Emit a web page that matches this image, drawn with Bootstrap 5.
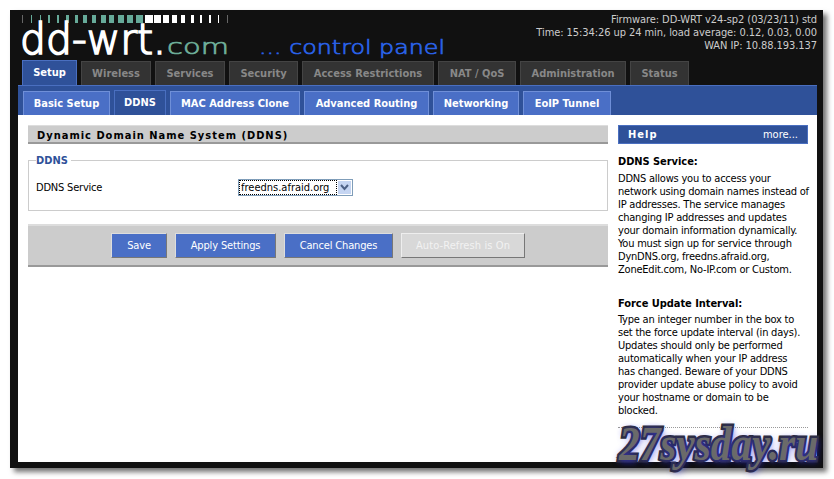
<!doctype html>
<html lang="en">
<head>
<meta charset="utf-8">
<title>DD-WRT control panel</title>
<link rel="stylesheet" href="https://cdn.jsdelivr.net/npm/bootstrap@5.3.0/dist/css/bootstrap.min.css">
<style>
html,body{height:100%;}
body{background:#fff;font-family:"DejaVu Sans Condensed","DejaVu Sans",sans-serif;font-size:11px;line-height:13px;color:#000;overflow:hidden;}
.frame{position:relative;margin:10px 0 0 10px;width:813px;height:458px;background:#111;box-shadow:4px 4px 5px rgba(0,0,0,.55);padding:0 6px 6px 8px;display:flex;flex-direction:column;}
.head{height:50px;flex:none;position:relative;}
.logo{position:absolute;left:-8px;top:0;}
.status{position:absolute;right:0;top:3px;text-align:right;color:#ccc;font-size:11px;line-height:13px;white-space:nowrap;letter-spacing:-.07px;}
.toptabs{height:25px;flex:none;margin-left:4px;gap:4px;align-items:flex-end;position:relative;}
.toptabs .nav-link{height:24px;padding:0;background:#333;border:1px solid #444;border-bottom:0;color:#888;font-weight:700;font-size:11px;line-height:24px;text-align:center;}
.toptabs .nav-link.on{height:25px;background:#2f5199;border-color:#4a6fc0;color:#fff;}
.subtabs{height:30px;flex:none;background:#2f5199;border-top:1px solid #4a6fc0;padding-left:5px;gap:4px;align-items:flex-end;}
.subtabs .nav-link{height:24px;padding:0;background:#4a6fc6;border:1px solid #6f8fd8;border-bottom:0;color:#fff;font-weight:700;font-size:11px;line-height:24px;text-align:center;}
.subtabs .nav-link.on{height:25px;background:#2f5199;border-color:#4a6fc0;}
.paper{flex:1 1 auto;background:#fff;padding:10px 10px 0;gap:10px;min-height:0;}
.mainpane{width:580px;flex:none;}
.sidepane{width:190px;flex:none;white-space:nowrap;}
.bar-title{height:19px;background:#ccc;border-bottom:2px solid #999;border-top:1px solid #ddd;padding-left:9px;font-weight:700;font-size:11px;letter-spacing:1px;line-height:19px;margin:0;}
.group{border:1px solid #ccc;margin:10px 0 13px;height:57px;padding:0 7px;}
.group legend{float:none;width:auto;margin:0;padding:0 3px 0 0;font-size:11px;font-weight:700;color:#2f5199;line-height:13px;}
.fieldrow{margin-top:12px;align-items:center;height:17px;}
.fieldname{width:202px;flex:none;letter-spacing:-.2px;}
.selectbox{border:1px solid #7f9db9;height:17px;background:#fff;width:115px;}
.selectbox select{appearance:none;border:1px dotted #000;background:#fff;font:inherit;padding:0 1px;height:15px;width:98px;line-height:13px;color:#000;}
.selectbox svg{flex:none;}
.actions{height:43px;background:#ccc;border-top:2px solid #ddd;border-bottom:2px solid #999;gap:8px;padding-left:83px;align-items:center;}
.actions .btn{height:25px;padding:0;border-radius:0;font-size:11px;line-height:21px;letter-spacing:-.15px;color:#fff;background:#4a6fc6;border:1px solid;border-color:#ddd #777 #777 #ddd;}
.actions .btn.off{background:#d8d8d8;color:#f2f2f2;opacity:1;letter-spacing:.1px;border-color:#eee #777 #777 #eee;}
.bar-help{height:19px;background:#2f5199;border:1px solid #4a6fc0;color:#fff;padding:0 9px;line-height:18px;}
.bar-help strong{letter-spacing:1px;}
.bar-help a{color:#fff;text-decoration:none;}
.helpitem{margin:0;}
.helpitem dt{font-weight:700;margin:10px 0 3px;font-size:11px;letter-spacing:-.05px;}
.helpitem dt:first-child{margin:11px 0 4px;}
.helpitem dd{margin:0 0 21px;letter-spacing:-.22px;}
.helpitem dd.tail{margin-bottom:10px;}
.rule{border:0;border-top:1px dotted #999;opacity:1;margin:0;}
.mark27{position:absolute;left:609px;top:406px;font:italic 700 48px/56px "Liberation Serif",serif;color:#6a6a6a;-webkit-text-stroke:5px #2e2e2e;paint-order:stroke fill;text-shadow:0 0 7px rgba(60,60,255,.55),2px 3px 8px rgba(30,30,200,.5);white-space:nowrap;transform:scaleX(.86);transform-origin:left center;}
.w1{width:70px}
</style>
</head>
<body>
<div class="frame">
  <div class="head">
    <svg class="logo" width="450" height="60" viewBox="10 0 450 60" role="img" aria-label="dd-wrt.com control panel">
      <g fill="#66aa99">
        <rect x="22" y="5" width="1" height="8" fill="#666"/><rect x="31" y="5" width="1" height="8"/><rect x="40" y="5" width="1" height="8"/><rect x="48" y="5" width="2" height="8"/><rect x="57" y="5" width="2" height="8"/><rect x="66" y="5" width="3" height="8"/><rect x="75" y="5" width="3" height="8"/><rect x="83" y="5" width="4" height="8"/><rect x="92" y="5" width="4" height="8"/><rect x="101" y="5" width="5" height="8"/><rect x="109" y="5" width="5" height="8"/><rect x="118" y="5" width="6" height="8"/><rect x="127" y="5" width="6" height="8"/><rect x="136" y="5" width="7" height="8"/>
      </g>
      <g fill="#fff">
        <rect x="145" y="5" width="8" height="8"/><rect x="154" y="5" width="7" height="8"/><rect x="163" y="5" width="6" height="8"/><rect x="172" y="5" width="5" height="8"/><rect x="181" y="5" width="4" height="8"/><rect x="191" y="5" width="3" height="8"/><rect x="200" y="5" width="2" height="8"/><rect x="209" y="5" width="2" height="8"/><rect x="218" y="5" width="1" height="8"/><rect x="227" y="5" width="1" height="8" fill="#666"/>
      </g>
      <text x="20" y="44" font-family="DejaVu Sans" font-size="42" font-weight="200" textLength="146" lengthAdjust="spacingAndGlyphs" fill="#fff" stroke="#fff" stroke-width="1.7">dd-wrt.</text>
      <text x="167" y="44" font-family="DejaVu Sans" font-size="22" font-weight="200" textLength="62" lengthAdjust="spacingAndGlyphs" fill="#6fb09a" stroke="#6fb09a" stroke-width=".7">com</text>
      <text x="259" y="44" font-family="DejaVu Sans" font-size="20" font-weight="200" textLength="186" lengthAdjust="spacingAndGlyphs" fill="#2a62e8" stroke="#2a62e8" stroke-width=".7">... control panel</text>
    </svg>
    <div class="status">Firmware: DD-WRT v24-sp2 (03/23/11) std<br>Time: 15:34:26 up 24 min, load average: 0.12, 0.03, 0.00<br>WAN IP: 10.88.193.137</div>
  </div>
  <ul class="nav toptabs">
    <li class="nav-item"><a class="nav-link on" href="#" style="width:55px">Setup</a></li>
    <li class="nav-item"><a class="nav-link w1" href="#">Wireless</a></li>
    <li class="nav-item"><a class="nav-link w1" href="#">Services</a></li>
    <li class="nav-item"><a class="nav-link" href="#" style="width:69px">Security</a></li>
    <li class="nav-item"><a class="nav-link" href="#" style="width:132px">Access Restrictions</a></li>
    <li class="nav-item"><a class="nav-link" href="#" style="width:78px">NAT / QoS</a></li>
    <li class="nav-item"><a class="nav-link" href="#" style="width:106px">Administration</a></li>
    <li class="nav-item"><a class="nav-link" href="#" style="width:59px">Status</a></li>
  </ul>
  <ul class="nav subtabs">
    <li class="nav-item"><a class="nav-link" href="#" style="width:87px">Basic Setup</a></li>
    <li class="nav-item"><a class="nav-link on" href="#" style="width:52px">DDNS</a></li>
    <li class="nav-item"><a class="nav-link" href="#" style="width:130px">MAC Address Clone</a></li>
    <li class="nav-item"><a class="nav-link" href="#" style="width:125px">Advanced Routing</a></li>
    <li class="nav-item"><a class="nav-link" href="#" style="width:86px">Networking</a></li>
    <li class="nav-item"><a class="nav-link" href="#" style="width:88px">EoIP Tunnel</a></li>
  </ul>
  <div class="paper d-flex">
    <div class="mainpane">
      <h2 class="bar-title">Dynamic Domain Name System (DDNS)</h2>
      <fieldset class="group">
        <legend>DDNS</legend>
        <div class="fieldrow d-flex">
          <div class="fieldname">DDNS Service</div>
          <div class="selectbox d-flex">
            <select aria-label="DDNS Service"><option>freedns.afraid.org</option></select>
            <svg width="15" height="15" viewBox="0 0 15 15"><rect x=".5" y=".5" width="14" height="14" fill="#c5d5f2" stroke="#fff"/><path d="M4 5l3.500 4L11 5" fill="none" stroke="#4d6185" stroke-width="2"/></svg>
          </div>
        </div>
      </fieldset>
      <div class="actions d-flex">
        <button type="button" class="btn" style="width:56px">Save</button>
        <button type="button" class="btn" style="width:101px">Apply Settings</button>
        <button type="button" class="btn" style="width:109px">Cancel Changes</button>
        <button type="button" class="btn off" style="width:124px" disabled>Auto-Refresh is On</button>
      </div>
    </div>
    <aside class="sidepane">
      <div class="bar-help d-flex justify-content-between"><strong>Help</strong><a href="#">more...</a></div>
      <dl class="helpitem">
        <dt>DDNS Service:</dt>
        <dd>DDNS allows you to access your<br>network using domain names instead of<br>IP addresses. The service manages<br>changing IP addresses and updates<br>your domain information dynamically.<br>You must sign up for service through<br>DynDNS.org, freedns.afraid.org,<br>ZoneEdit.com, No-IP.com or Custom.</dd>
        <dt>Force Update Interval:</dt>
        <dd class="tail">Type an integer number in the box to<br>set the force update interval (in days).<br>Updates should only be performed<br>automatically when your IP address<br>has changed. Beware of your DDNS<br>provider update abuse policy to avoid<br>your hostname or domain to be<br>blocked.</dd>
      </dl>
      <hr class="rule">
    </aside>
  </div>
  <div class="mark27">27sysday.ru</div>
</div>
</body>
</html>
